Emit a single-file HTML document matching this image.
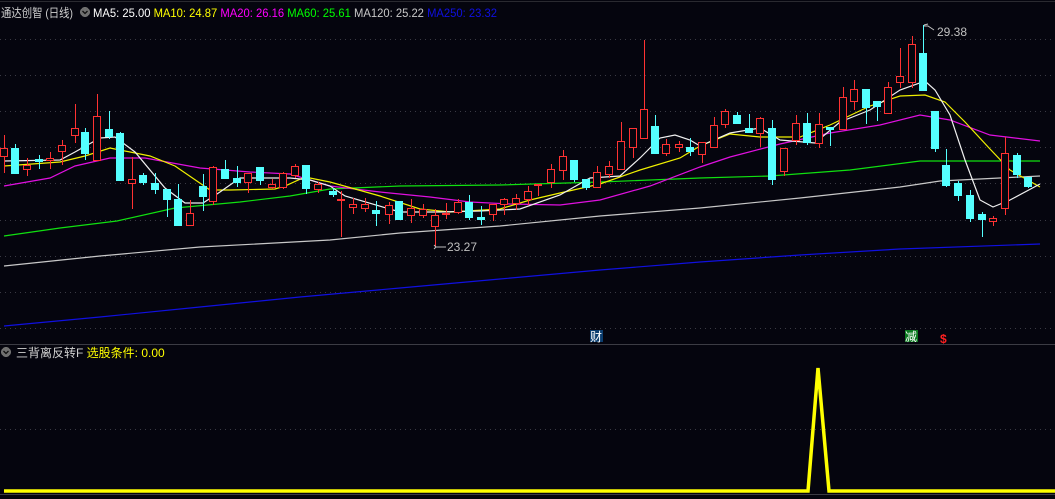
<!DOCTYPE html>
<html><head><meta charset="utf-8"><style>
html,body{margin:0;padding:0;background:#05050e;width:1055px;height:499px;overflow:hidden}
svg{display:block}
text{font-family:"Liberation Sans","Noto Sans CJK SC",sans-serif;font-size:12px}
</style></head><body>
<svg width="1055" height="499" viewBox="0 0 1055 499" xmlns="http://www.w3.org/2000/svg" shape-rendering="crispEdges">
<rect width="1055" height="499" fill="#05050e"/>
<line x1="0" y1="1.5" x2="1055" y2="1.5" stroke="#2a2a30"/>
<g stroke="#3a3a44" stroke-dasharray="1,4">
<line x1="0" y1="39.5" x2="1055" y2="39.5"/><line x1="0" y1="75.5" x2="1055" y2="75.5"/><line x1="0" y1="111.5" x2="1055" y2="111.5"/><line x1="0" y1="147.5" x2="1055" y2="147.5"/><line x1="0" y1="183.5" x2="1055" y2="183.5"/><line x1="0" y1="220.5" x2="1055" y2="220.5"/><line x1="0" y1="256.5" x2="1055" y2="256.5"/><line x1="0" y1="292.5" x2="1055" y2="292.5"/><line x1="0" y1="328.5" x2="1055" y2="328.5"/><line x1="0" y1="429.5" x2="1055" y2="429.5"/>
</g>
<line x1="0" y1="344.5" x2="1055" y2="344.5" stroke="#3c3c44"/>
<line x1="0" y1="494.5" x2="1055" y2="494.5" stroke="#3c3c44"/>
<g fill="none" stroke-width="1.2" shape-rendering="auto">
<polyline stroke="#1010e0" points="4,326 100,317 200,307 300,297 400,288 500,279 600,270 700,262 800,255 900,249 1040,244"/>
<polyline stroke="#c8c8c8" points="4,266 100,256 200,247 330,240 400,233 500,226 600,216 700,208 800,198 900,187 940,181 1040,176"/>
<polyline stroke="#10e010" points="4,236 60,228 117,221 175,208 240,202 290,196 330,189 400,186 500,185 600,182 700,178 770,176 850,170 920,161 1040,161"/>
<polyline stroke="#e010e0" points="4,186 50,178 75,166 110,158 145,158 200,168 250,172 290,174 330,186 380,192 430,197 470,202 510,204 560,205 600,200 650,186 700,167 730,157 780,144 830,133 880,125 920,115 950,120 990,135 1040,141"/>
<polyline stroke="#f0f000" points="4,166 60,162 85,156 110,148 150,156 175,166 210,190 230,190 275,189 285,186 305,177 330,182 380,196 420,209 450,212 500,209 530,200 560,193 600,184 640,170 680,158 700,146 730,134 760,137 800,137 830,125 870,106 900,96 925,95 945,102 965,122 990,149 1010,170 1040,187"/>
<polyline stroke="#f0f0f0" points="4,161 60,160 75,152 100,138 115,137 135,152 165,188 185,203 203,203 220,192 240,178 255,178 290,178 310,180 330,186 345,196 400,212 440,212 480,211 520,209 560,195 590,178 620,176 640,158 660,138 675,135 690,140 700,146 730,133 760,128 780,140 815,143 840,122 870,110 900,90 925,81 935,90 950,115 965,160 980,200 993,207 1010,200 1040,184"/>
</g>
<g stroke="#ff3232" fill="#05050e">
<line x1="4.5" y1="135" x2="4.5" y2="173"/><rect x="0.5" y="148.5" width="7" height="8"/>
<line x1="27.5" y1="158" x2="27.5" y2="176"/><rect x="23.5" y="165.5" width="7" height="4"/>
<line x1="50.5" y1="152" x2="50.5" y2="169"/><rect x="46.5" y="158.5" width="7" height="2"/>
<line x1="62.5" y1="140" x2="62.5" y2="165"/><rect x="58.5" y="145.5" width="7" height="6"/>
<line x1="75.5" y1="104" x2="75.5" y2="143"/><rect x="71.5" y="128.5" width="7" height="7"/>
<line x1="97.5" y1="94" x2="97.5" y2="160"/><rect x="93.5" y="116.5" width="7" height="44"/>
<line x1="132.5" y1="157" x2="132.5" y2="209"/><rect x="128.5" y="179.5" width="7" height="4"/>
<line x1="190.5" y1="200" x2="190.5" y2="226"/><rect x="186.5" y="213.5" width="7" height="12"/>
<line x1="213.5" y1="166" x2="213.5" y2="205"/><rect x="209.5" y="167.5" width="7" height="34"/>
<line x1="248.5" y1="173" x2="248.5" y2="193"/><rect x="244.5" y="173.5" width="7" height="9"/>
<line x1="272.5" y1="179" x2="272.5" y2="189"/><rect x="268.5" y="184.5" width="7" height="3"/>
<line x1="283.5" y1="172" x2="283.5" y2="189"/><rect x="279.5" y="173.5" width="7" height="14"/>
<line x1="295.5" y1="164" x2="295.5" y2="178"/><rect x="291.5" y="166.5" width="7" height="9"/>
<line x1="318.5" y1="182" x2="318.5" y2="193"/><rect x="314.5" y="184.5" width="7" height="5"/>
<line x1="341.5" y1="191" x2="341.5" y2="237"/><rect x="337.5" y="199.5" width="7" height="1"/>
<line x1="353.5" y1="198" x2="353.5" y2="214"/><rect x="349.5" y="204.5" width="7" height="3"/>
<line x1="365.5" y1="198" x2="365.5" y2="212"/><rect x="361.5" y="204.5" width="7" height="4"/>
<line x1="389.5" y1="202" x2="389.5" y2="224"/><rect x="385.5" y="205.5" width="7" height="9"/>
<line x1="411.5" y1="199" x2="411.5" y2="223"/><rect x="407.5" y="208.5" width="7" height="7"/>
<line x1="423.5" y1="204" x2="423.5" y2="218"/><rect x="419.5" y="209.5" width="7" height="6"/>
<line x1="435.5" y1="209" x2="435.5" y2="247"/><rect x="431.5" y="215.5" width="7" height="11"/>
<line x1="446.5" y1="203" x2="446.5" y2="219"/><rect x="442.5" y="213.5" width="7" height="1"/>
<line x1="458.5" y1="199" x2="458.5" y2="214"/><rect x="454.5" y="202.5" width="7" height="10"/>
<line x1="493.5" y1="204" x2="493.5" y2="221"/><rect x="489.5" y="204.5" width="7" height="10"/>
<line x1="504.5" y1="198" x2="504.5" y2="215"/><rect x="500.5" y="199.5" width="7" height="5"/>
<line x1="516.5" y1="194" x2="516.5" y2="210"/><rect x="512.5" y="198.5" width="7" height="5"/>
<line x1="528.5" y1="186" x2="528.5" y2="205"/><rect x="524.5" y="191.5" width="7" height="8"/>
<line x1="538.5" y1="184" x2="538.5" y2="196"/><rect x="534.5" y="184.5" width="7" height="1"/>
<line x1="551.5" y1="164" x2="551.5" y2="188"/><rect x="547.5" y="169.5" width="7" height="13"/>
<line x1="563.5" y1="150" x2="563.5" y2="180"/><rect x="559.5" y="156.5" width="7" height="14"/>
<line x1="597.5" y1="166" x2="597.5" y2="188"/><rect x="593.5" y="172.5" width="7" height="15"/>
<line x1="609.5" y1="161" x2="609.5" y2="178"/><rect x="605.5" y="166.5" width="7" height="8"/>
<line x1="621.5" y1="122" x2="621.5" y2="169"/><rect x="617.5" y="141.5" width="7" height="28"/>
<line x1="633.5" y1="128" x2="633.5" y2="158"/><rect x="629.5" y="128.5" width="7" height="19"/>
<line x1="644.5" y1="40" x2="644.5" y2="139"/><rect x="640.5" y="109.5" width="7" height="29"/>
<line x1="666.5" y1="139" x2="666.5" y2="156"/><rect x="662.5" y="144.5" width="7" height="9"/>
<line x1="679.5" y1="141" x2="679.5" y2="152"/><rect x="675.5" y="144.5" width="7" height="3"/>
<line x1="702.5" y1="142" x2="702.5" y2="163"/><rect x="698.5" y="142.5" width="7" height="12"/>
<line x1="714.5" y1="117" x2="714.5" y2="148"/><rect x="710.5" y="125.5" width="7" height="22"/>
<line x1="725.5" y1="109" x2="725.5" y2="128"/><rect x="721.5" y="111.5" width="7" height="13"/>
<line x1="760.5" y1="117" x2="760.5" y2="147"/><rect x="756.5" y="118.5" width="7" height="15"/>
<line x1="784.5" y1="148" x2="784.5" y2="176"/><rect x="780.5" y="148.5" width="7" height="23"/>
<line x1="796.5" y1="115" x2="796.5" y2="145"/><rect x="792.5" y="123.5" width="7" height="17"/>
<line x1="819.5" y1="113" x2="819.5" y2="148"/><rect x="815.5" y="124.5" width="7" height="19"/>
<line x1="843.5" y1="87" x2="843.5" y2="129"/><rect x="839.5" y="97.5" width="7" height="32"/>
<line x1="854.5" y1="80" x2="854.5" y2="110"/><rect x="850.5" y="89.5" width="7" height="12"/>
<line x1="888.5" y1="82" x2="888.5" y2="113"/><rect x="884.5" y="87.5" width="7" height="26"/>
<line x1="900.5" y1="48" x2="900.5" y2="88"/><rect x="896.5" y="76.5" width="7" height="6"/>
<line x1="912.5" y1="36" x2="912.5" y2="88"/><rect x="908.5" y="44.5" width="7" height="38"/>
<line x1="993.5" y1="216" x2="993.5" y2="226"/><rect x="989.5" y="218.5" width="7" height="3"/>
<line x1="1005.5" y1="137" x2="1005.5" y2="215"/><rect x="1001.5" y="153.5" width="7" height="55"/>
</g>
<g stroke="#54ffff" fill="#54ffff">
<line x1="15.5" y1="144" x2="15.5" y2="173"/><rect x="11.5" y="148.5" width="7" height="25"/>
<line x1="39.5" y1="155" x2="39.5" y2="169"/><rect x="35.5" y="159.5" width="7" height="2"/>
<line x1="85.5" y1="128" x2="85.5" y2="160"/><rect x="81.5" y="132.5" width="7" height="21"/>
<line x1="109.5" y1="111" x2="109.5" y2="139"/><rect x="105.5" y="129.5" width="7" height="7"/>
<line x1="120.5" y1="132" x2="120.5" y2="181"/><rect x="116.5" y="133.5" width="7" height="47"/>
<line x1="143.5" y1="173" x2="143.5" y2="185"/><rect x="139.5" y="175.5" width="7" height="7"/>
<line x1="155.5" y1="173" x2="155.5" y2="194"/><rect x="151.5" y="183.5" width="7" height="6"/>
<line x1="167.5" y1="189" x2="167.5" y2="217"/><rect x="163.5" y="189.5" width="7" height="10"/>
<line x1="178.5" y1="184" x2="178.5" y2="226"/><rect x="174.5" y="199.5" width="7" height="26"/>
<line x1="203.5" y1="174" x2="203.5" y2="211"/><rect x="199.5" y="186.5" width="7" height="10"/>
<line x1="225.5" y1="160" x2="225.5" y2="178"/><rect x="221.5" y="169.5" width="7" height="9"/>
<line x1="237.5" y1="166" x2="237.5" y2="187"/><rect x="233.5" y="178.5" width="7" height="4"/>
<line x1="260.5" y1="167" x2="260.5" y2="185"/><rect x="256.5" y="167.5" width="7" height="13"/>
<line x1="306.5" y1="165" x2="306.5" y2="194"/><rect x="302.5" y="165.5" width="7" height="23"/>
<line x1="333.5" y1="188" x2="333.5" y2="197"/><rect x="329.5" y="191.5" width="7" height="3"/>
<line x1="376.5" y1="201" x2="376.5" y2="226"/><rect x="372.5" y="210.5" width="7" height="3"/>
<line x1="399.5" y1="201" x2="399.5" y2="219"/><rect x="395.5" y="201.5" width="7" height="18"/>
<line x1="469.5" y1="195" x2="469.5" y2="220"/><rect x="465.5" y="202.5" width="7" height="15"/>
<line x1="481.5" y1="206" x2="481.5" y2="225"/><rect x="477.5" y="217.5" width="7" height="2"/>
<line x1="574.5" y1="160" x2="574.5" y2="182"/><rect x="570.5" y="160.5" width="7" height="19"/>
<line x1="586.5" y1="179" x2="586.5" y2="190"/><rect x="582.5" y="179.5" width="7" height="8"/>
<line x1="655.5" y1="115" x2="655.5" y2="154"/><rect x="651.5" y="126.5" width="7" height="27"/>
<line x1="690.5" y1="138" x2="690.5" y2="156"/><rect x="686.5" y="147.5" width="7" height="4"/>
<line x1="737.5" y1="112" x2="737.5" y2="123"/><rect x="733.5" y="115.5" width="7" height="8"/>
<line x1="749.5" y1="114" x2="749.5" y2="133"/><rect x="745.5" y="128.5" width="7" height="4"/>
<line x1="772.5" y1="120" x2="772.5" y2="185"/><rect x="768.5" y="128.5" width="7" height="51"/>
<line x1="807.5" y1="113" x2="807.5" y2="145"/><rect x="803.5" y="123.5" width="7" height="19"/>
<line x1="830.5" y1="127" x2="830.5" y2="146"/><rect x="826.5" y="127.5" width="7" height="2"/>
<line x1="866.5" y1="89" x2="866.5" y2="124"/><rect x="862.5" y="89.5" width="7" height="18"/>
<line x1="877.5" y1="101" x2="877.5" y2="121"/><rect x="873.5" y="101.5" width="7" height="5"/>
<line x1="923.5" y1="25" x2="923.5" y2="90"/><rect x="919.5" y="53.5" width="7" height="37"/>
<line x1="935.5" y1="111" x2="935.5" y2="152"/><rect x="931.5" y="111.5" width="7" height="37"/>
<line x1="946.5" y1="149" x2="946.5" y2="187"/><rect x="942.5" y="165.5" width="7" height="20"/>
<line x1="958.5" y1="181" x2="958.5" y2="201"/><rect x="954.5" y="183.5" width="7" height="12"/>
<line x1="970.5" y1="190" x2="970.5" y2="222"/><rect x="966.5" y="195.5" width="7" height="23"/>
<line x1="982.5" y1="212" x2="982.5" y2="237"/><rect x="978.5" y="214.5" width="7" height="5"/>
<line x1="1017.5" y1="153" x2="1017.5" y2="178"/><rect x="1013.5" y="155.5" width="7" height="19"/>
<line x1="1028.5" y1="177" x2="1028.5" y2="188"/><rect x="1024.5" y="177.5" width="7" height="9"/>
</g>
<g stroke="#c0c0c0" fill="none" shape-rendering="auto">
<path d="M924 26 L928 26 L934 30"/><path d="M924 25 L928 24"/>
<path d="M436 247 L434 245 M436 247 L434 249 M436 247 L446 247"/>
</g>
<text x="937" y="36" fill="#c0c0c0">29.38</text>
<text x="447" y="251" fill="#c0c0c0">23.27</text>
<rect x="590" y="330" width="13" height="12" fill="#0b3d6e"/>
<text x="590" y="341" fill="#ffffff" font-size="11">财</text>
<rect x="905" y="330" width="13" height="12" fill="#0b7a20"/>
<text x="905" y="341" fill="#ffffff" font-size="11">减</text>
<text x="940" y="343" fill="#ff2020" font-size="12" font-weight="bold">$</text>
<polyline shape-rendering="auto" fill="none" stroke="#ffff00" stroke-width="3.5" points="4,491 808,491 818,368 829,491 1055,491"/>
<text x="1" y="17" fill="#d0d0d0" font-size="12" textLength="72" lengthAdjust="spacingAndGlyphs">通达创智 (日线)</text>
<circle cx="85" cy="12" r="5" fill="#707070"/>
<path d="M82.5 11 L85 13.5 L87.5 11" stroke="#101010" stroke-width="1.3" fill="none" shape-rendering="auto"/>
<text x="93" y="17" font-size="12" textLength="404" lengthAdjust="spacingAndGlyphs"><tspan fill="#ffffff">MA5: 25.00 </tspan><tspan fill="#ffff00">MA10: 24.87 </tspan><tspan fill="#ff00ff">MA20: 26.16 </tspan><tspan fill="#00ff00">MA60: 25.61 </tspan><tspan fill="#c8c8c8">MA120: 25.22 </tspan><tspan fill="#1010e0">MA250: 23.32</tspan></text>
<circle cx="6" cy="352" r="5" fill="#707070"/>
<path d="M3.5 351 L6 353.5 L8.5 351" stroke="#101010" stroke-width="1.3" fill="none" shape-rendering="auto"/>
<text x="16" y="357" font-size="13"><tspan fill="#d0d0d0">三背离反转F </tspan><tspan fill="#ffff00">选股条件: 0.00</tspan></text>
</svg>
</body></html>
